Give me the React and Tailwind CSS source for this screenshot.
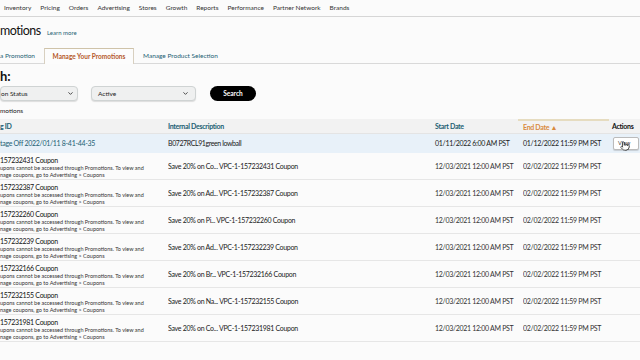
import { ChevronDown, Pointer } from 'lucide-react'

const nav = ['Inventory', 'Pricing', 'Orders', 'Advertising', 'Stores', 'Growth', 'Reports', 'Performance', 'Partner Network', 'Brands']

const coupons = [
  ['157232431', 'Co'],
  ['157232387', 'Ad'],
  ['157232260', 'Pi'],
  ['157232239', 'Ad'],
  ['157232166', 'Br'],
  ['157232155', 'Na'],
  ['157231981', 'Co'],
]

function Select({ label, className }) {
  return (
    <div className={`h-[15px] flex items-center justify-between rounded-[4px] border border-[#cfd3d3] bg-[#eff0f0] shadow-[0_1px_1px_rgba(0,0,0,0.12)] text-[6.5px] text-[#222] ${className}`}>
      <span>{label}</span>
      <ChevronDown className="w-[7px] h-[7px] text-[#333]" strokeWidth={3} />
    </div>
  )
}

export default function App() {
  return (
    <div className="w-[640px] h-[360px] overflow-hidden bg-[#fbfbfb] text-[#111] whitespace-nowrap" style={{ fontFamily: 'Lato, "Noto Sans", sans-serif' }}>
      {/* Top nav */}
      <div className="h-[17px] flex items-center gap-[9px] pl-[4px] border-b border-[#d6d6d6] text-[6.5px] text-[#333]">
        {nav.map((n) => (
          <span key={n}>{n}</span>
        ))}
      </div>

      {/* Title */}
      <div className="flex items-baseline h-[30px] pt-[8px]">
        <h1 className="w-[47px] shrink-0 text-[12.5px] leading-none tracking-[-0.5px] text-[#111]">motions</h1>
        <a className="text-[6px] text-[#1d5f74]">Learn more</a>
      </div>

      {/* Tabs */}
      <div className="flex items-end h-[17px] border-b border-[#d9d9d9] text-[6.5px]">
        <div className="w-[44px] h-[15px] flex items-center text-[#1d5f74]">a Promotion</div>
        <div className="w-[90px] h-[16px] -mb-px flex items-center justify-center border border-b-0 border-[#d8d0c0] border-t-[#cfc3a9] bg-[#fcfcfc] font-bold text-[#b5592b]">Manage Your Promotions</div>
        <div className="h-[15px] flex items-center pl-[9px] text-[#1d5f74]">Manage Product Selection</div>
      </div>

      {/* Search */}
      <div className="pt-[6px] text-[13px] font-bold leading-none h-[21px]">h:</div>
      <div className="flex items-center h-[17px]">
        <Select label="on Status" className="w-[78px] pr-[3px]" />
        <Select label="Active" className="w-[105px] ml-[13px] px-[6px]" />
        <button className="ml-[14px] w-[46px] h-[15px] rounded-full bg-black text-white text-[6.5px] font-bold">Search</button>
      </div>
      <div className="h-[17px] flex items-center text-[6.5px] text-[#222]">motions</div>

      {/* Table */}
      <div className="grid grid-cols-[168px_267px_88px_89px_1fr] text-[7px] tracking-[-0.3px]">
        <div className="h-[15px] flex items-center bg-[#f2f2f2] font-bold text-[#1d5f74] border-b border-[#e4e4e4]">g ID</div>
        <div className="h-[15px] flex items-center bg-[#f2f2f2] font-bold text-[#1d5f74] border-b border-[#e4e4e4]">Internal Description</div>
        <div className="h-[15px] flex items-center bg-[#f2f2f2] font-bold text-[#1d5f74] border-b border-[#e4e4e4]">Start Date</div>
        <div className="h-[15px] flex items-center bg-[#f2f2f2] font-bold text-[#d98a3d] border-b border-[#e4e4e4] border-t-2 border-t-[#e6dcc0] -ml-[5px] pl-[5px] mr-[3px]">End Date ▲</div>
        <div className="h-[15px] flex items-center bg-[#f2f2f2] font-bold text-[#111] border-b border-[#e4e4e4] -ml-[3px] pl-[3px]">Actions</div>

        {/* highlighted row */}
        <div className="h-[19px] flex items-center bg-[#e8f1f9] text-[#1d5f74]">tage Off 2022/01/11 8-41-44-35</div>
        <div className="h-[19px] flex items-center bg-[#e8f1f9] text-[#1a1a1a] tracking-[-0.4px]">B0727RCL91green lowball</div>
        <div className="h-[19px] flex items-center bg-[#e8f1f9] text-[#1a1a1a]">01/11/2022 6:00 AM PST</div>
        <div className="h-[19px] flex items-center bg-[#e8f1f9] text-[#1a1a1a]">01/12/2022 11:59 PM PST</div>
        <div className="h-[19px] flex items-center bg-[#e8f1f9] relative">
          <div className="w-[26px] h-[13px] ml-[1px] flex items-center pl-[4px] bg-white border border-[#bbb] rounded-[2px] text-[5.5px] tracking-normal text-[#333] shadow-[0_1px_1px_rgba(0,0,0,0.15)]">View</div>
          <Pointer className="absolute left-[8px] top-[7px] w-[10px] h-[10px] text-black fill-white" strokeWidth={1.5} />
        </div>

        {coupons.map(([id, abbr]) => (
          <Row key={id} id={id} abbr={abbr} />
        ))}
      </div>
    </div>
  )
}

function Row({ id, abbr }) {
  const cell = 'h-[27px] overflow-hidden border-b border-[#e6e6e6]'
  return (
    <>
      <div className={`${cell} pt-[2px]`}>
        <div className="text-[7px] leading-[10px] text-[#111]">{id} Coupon</div>
        <div className="text-[5.5px] leading-[7px] tracking-normal text-[#333]">upons cannot be accessed through Promotions. To view and</div>
        <div className="text-[5.5px] leading-[7px] tracking-normal text-[#333]">nage coupons, go to Advertising &gt; Coupons</div>
      </div>
      <div className={`${cell} flex items-center text-[#1a1a1a]`}>
        Save 20% on {abbr}... VPC-1-{id} Coupon
      </div>
      <div className={`${cell} flex items-center text-[#333]`}>12/03/2021 12:00 AM PST</div>
      <div className={`${cell} flex items-center text-[#333]`}>02/02/2022 11:59 PM PST</div>
      <div className={cell}></div>
    </>
  )
}
